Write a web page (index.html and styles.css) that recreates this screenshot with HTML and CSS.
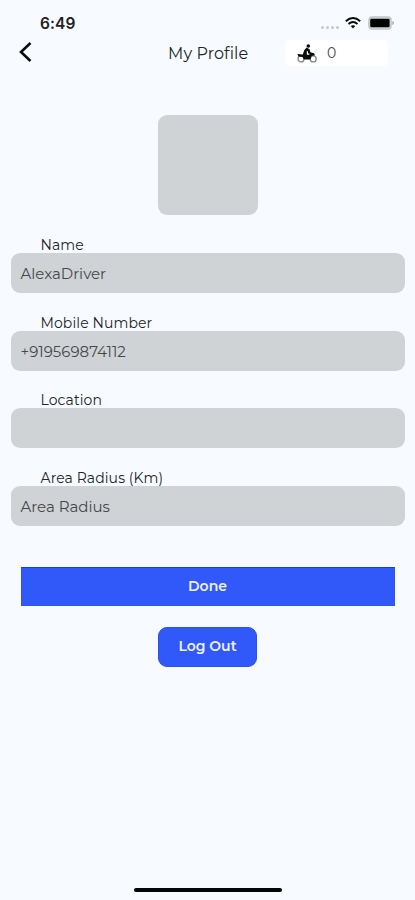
FILE: index.html
```html
<!DOCTYPE html>
<html lang="en">
<head>
<meta charset="utf-8">
<meta name="viewport" content="width=device-width, initial-scale=1">
<title>My Profile</title>
<link rel="stylesheet" href="styles.css">
</head>
<body>
<main class="screen">
  <div class="status">
    <span class="clock">6:49</span>
    <div class="indicators">
      <span class="dots"><i></i><i></i><i></i><i></i></span>
      <svg class="wifi" viewBox="0 0 16 12" aria-hidden="true">
        <path d="M.8 4.2Q8-2 15.2 4.2M3.5 7Q8 3.2 12.5 7" fill="none" stroke="#08090a" stroke-width="1.9"/>
        <path d="M5.7 9.1Q8 7.2 10.3 9.1L8 11.6Z" fill="#08090a"/>
      </svg>
      <svg class="battery" viewBox="0 0 27 14" aria-hidden="true">
        <rect x=".9" y=".9" width="22.2" height="12.2" rx="3" fill="#d5d8d9" stroke="#c0c3c5" stroke-width="1.3"/>
        <rect x="2.2" y="2.8" width="19.4" height="8.4" rx="1.2" fill="#020303"/>
        <path d="M24.4 4.8Q27.6 7 24.4 9.2Z" fill="#a3a6a8"/>
      </svg>
    </div>
  </div>
  <header class="header">
    <svg class="back" viewBox="0 0 14 22" aria-label="Back"><path d="M11.5 2L2 11L11.5 20" fill="none" stroke="#0b0c0d" stroke-width="2.6"/></svg>
    <h1 class="title">My Profile</h1>
    <div class="counter">
      <svg class="rider" viewBox="0 0 20 19" aria-hidden="true">
        <g fill="none" stroke="#85888a" stroke-width="1.3"><circle cx="4" cy="14.9" r="3"/><circle cx="16.2" cy="14.9" r="3"/></g>
        <circle cx="11.3" cy="2" r="1.8" fill="#0a0b0c"/>
        <path d="M9.6 3.4L12.6 5.3L13.4 8.2L17 9.2L18 11.2L14.6 12L13.4 15.5H6.8L5.6 13L1.4 12.4L.4 9.9L5.8 10.4L7.2 6.3Z" fill="#0a0b0c"/>
        <path d="M10.4 7.2V10.2H12.4" fill="none" stroke="#fff" stroke-width="1.2"/>
      </svg>
      <span class="count">0</span>
    </div>
  </header>
  <div class="avatar"></div>
  <div class="form">
    <div class="field"><span class="label">Name</span><div class="value">AlexaDriver</div></div>
    <div class="field"><span class="label">Mobile Number</span><div class="value">+919569874112</div></div>
    <div class="field"><span class="label">Location</span><div class="value"></div></div>
    <div class="field"><span class="label">Area Radius (Km)</span><div class="value">Area Radius</div></div>
  </div>
  <button class="done">Done</button>
  <button class="logout">Log Out</button>
  <div class="home"></div>
</main>
</body>
</html>
```
FILE: styles.css
```css
* { box-sizing: border-box; }
body { margin: 0; background: #f7fbff; font-family: Montserrat, Inter, sans-serif; color: #222426; }
.screen { width: 415px; height: 900px; display: flex; flex-direction: column; align-items: center; overflow: hidden; }
.status { width: 100%; height: 38px; padding: 14px 20px 0 40px; display: flex; justify-content: space-between; flex: none; }
.clock { font: 600 15.5px/19px Inter, sans-serif; color: #202224; letter-spacing: .1px; }
.indicators { display: flex; align-items: flex-start; }
.dots { display: flex; gap: 2px; margin: 12px 6px 0 0; }
.dots i { width: 3px; height: 3px; border-radius: 50%; background: #c5c9cc; }
.wifi { width: 16px; height: 12px; margin: 3px 7px 0 0; }
.battery { width: 27px; height: 14px; margin-top: 2px; }
.header { width: 100%; height: 30px; display: grid; grid-template-columns: 168px 117px 103px; align-items: center; flex: none; }
.back { width: 14px; height: 22px; margin: -3px 0 0 19px; }
.title { margin: 2px 0 0; font-size: 16px; font-weight: 400; line-height: 20px; letter-spacing: .1px; white-space: nowrap; }
.counter { height: 26px; background: #fff; border-radius: 5px; display: flex; align-items: center; padding-left: 12px; }
.rider { width: 20px; height: 19px; }
.count { margin-left: 10px; font-size: 14px; line-height: 18px; color: #45484a; }
.avatar { width: 100px; height: 100px; margin-top: 47px; background: #cfd3d6; border-radius: 9px; flex: none; }
.form { width: 394px; margin-top: 20px; display: flex; flex-direction: column; gap: 19.67px; flex: none; }
.field { height: 58px; display: flex; flex-direction: column; }
.label { height: 18px; padding-left: 30px; font-size: 14px; line-height: 20px; letter-spacing: .1px; white-space: nowrap; }
.value { height: 40px; padding-left: 10px; border-radius: 9px; background: #cfd3d6; font-size: 15px; line-height: 42px; color: #45484b; white-space: nowrap; }
.done, .logout { display: block; padding: 0; border: 0; background: #3159fa; color: #eef2ff; font: 600 14px/36px Montserrat, Inter, sans-serif; text-align: center; flex: none; }
.done { width: 374px; height: 39px; margin-top: 41px; padding-bottom: 1px; border: 1px solid #3154ec; border-top-color: #193bd2; }
.logout { width: 99px; height: 40px; margin-top: 21px; padding-bottom: 2px; border-radius: 9px; border: 1px solid #2850ec; }
.home { width: 148px; height: 4px; margin: auto 0 8px; border-radius: 2px; background: #050606; flex: none; }
```
